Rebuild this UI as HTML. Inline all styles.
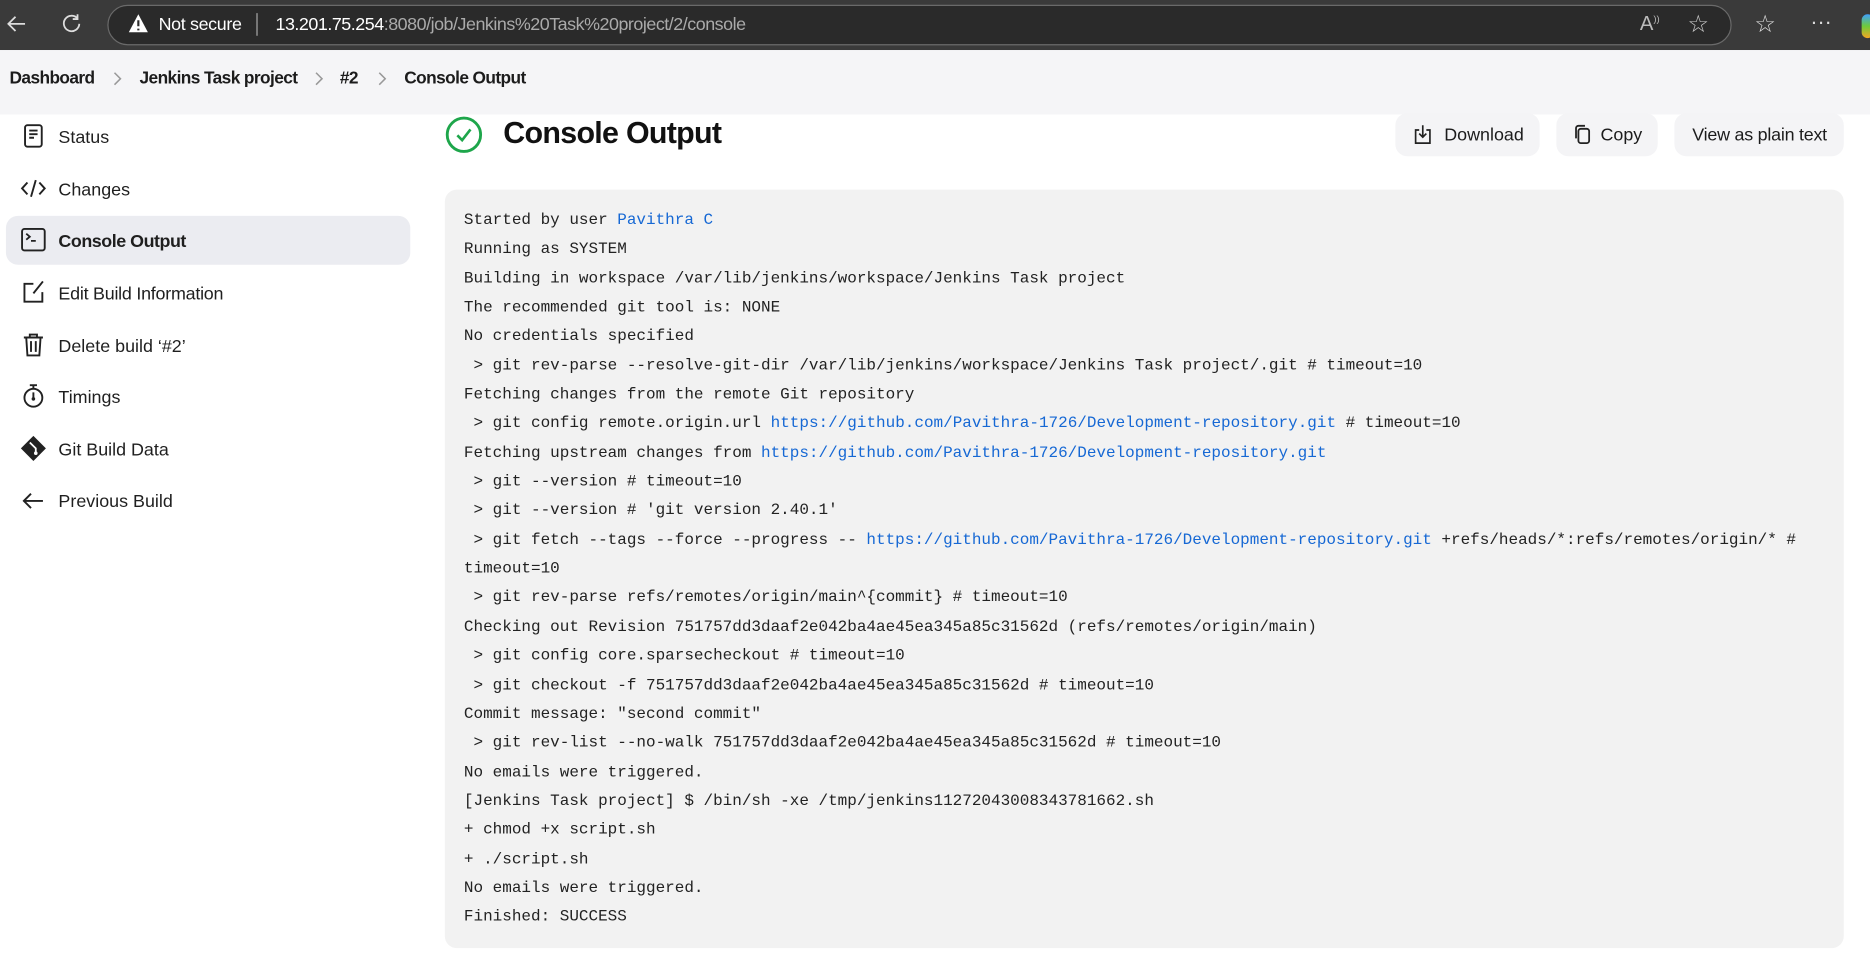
<!DOCTYPE html>
<html><head><meta charset="utf-8"><style>
html,body{margin:0;padding:0;width:1870px;height:967px;overflow:hidden;background:#fff}
#w{position:absolute;left:0;top:0;width:1568px;height:811px;transform:scale(1.19260);transform-origin:0 0;font-family:"Liberation Sans",sans-serif;color:#1c1c1c}
.a{position:absolute}
.top{left:0;top:0;width:1568px;height:42px;background:#3a3a3a}
.pill{left:90px;top:4px;width:1360px;height:32px;border:1px solid #6a6a6a;border-radius:17px;background:#2a2a2a}
.crumb{left:0;top:42px;width:1568px;height:54px;background:#f5f5f7}
.bc{top:58px;font-size:14.5px;font-weight:bold;color:#1c1c1c;letter-spacing:-0.5px}
.chev{top:60px}
.side{font-size:15px;color:#1f1f1f;left:49px}
.ic{left:17px;width:22px;height:22px}
.btn{top:95px;height:36px;background:#f4f4f6;border-radius:10px;font-size:15px;line-height:37px;color:#1c1c1c}
.con{left:373px;top:159px;width:1173px;height:636px;background:#f2f2f2;border-radius:10px}
pre{position:absolute;left:389px;top:174px;margin:0;font-family:"Liberation Mono",monospace;font-size:13.4px;line-height:24.35px;color:#222}
pre a{color:#1668d4;text-decoration:none}
</style></head><body><div id="w">
<div class="a top"></div>
<svg class="a" style="left:4px;top:10px" width="20" height="20" viewBox="0 0 20 20"><path d="M17 10H3M9 4L3 10l6 6" stroke="#ddd" stroke-width="1.5" fill="none"/></svg>
<svg class="a" style="left:50px;top:10px" width="20" height="20" viewBox="0 0 20 20"><path d="M15 5.5A6.5 6.5 0 1 0 16.5 10M15 2v4h-4" stroke="#ddd" stroke-width="1.5" fill="none"/></svg>
<div class="a pill"></div>
<svg class="a" style="left:107px;top:11px" width="18" height="17" viewBox="0 0 18 17"><path d="M9 1L17 16H1Z" fill="#fff"/><path d="M9 6v5M9 13v1.5" stroke="#2a2a2a" stroke-width="1.8"/></svg>
<div class="a" style="left:133px;top:12px;font-size:15px;color:#fff;letter-spacing:-0.3px">Not secure</div>
<div class="a" style="left:215px;top:11px;width:1px;height:19px;background:#aaa"></div>
<div class="a" style="left:231px;top:12px;font-size:15px;color:#aaa;letter-spacing:-0.4px"><span style="color:#fff">13.201.75.254</span>:8080/job/Jenkins%20Task%20project/2/console</div>
<div class="a" style="left:1375px;top:10px;font-size:17px;color:#bbb">A<sup style="font-size:8px">))</sup></div>
<div class="a" style="left:1415px;top:8px;font-size:20px;color:#ccc">☆</div>
<div class="a" style="left:1471px;top:8px;font-size:20px;color:#ddd">☆</div>
<div class="a" style="left:1518px;top:8px;font-size:18px;color:#ddd">···</div>
<div class="a" style="left:1561px;top:12px;width:10px;height:20px;border-radius:5px;background:linear-gradient(#3fa0ff,#6ecb3a,#f5a623)"></div>

<div class="a crumb"></div>
<div class="a bc" style="left:8px">Dashboard</div>
<svg class="a chev" style="left:94px" width="8" height="12" viewBox="0 0 8 12"><path d="M2 1l5 5-5 5" stroke="#999" stroke-width="1.3" fill="none"/></svg>
<div class="a bc" style="left:117px">Jenkins Task project</div>
<svg class="a chev" style="left:263px" width="8" height="12" viewBox="0 0 8 12"><path d="M2 1l5 5-5 5" stroke="#999" stroke-width="1.3" fill="none"/></svg>
<div class="a bc" style="left:285px">#2</div>
<svg class="a chev" style="left:316px" width="8" height="12" viewBox="0 0 8 12"><path d="M2 1l5 5-5 5" stroke="#999" stroke-width="1.3" fill="none"/></svg>
<div class="a bc" style="left:339px">Console Output</div>

<div class="a" style="left:5px;top:181px;width:339px;height:41px;background:#ebecf1;border-radius:10px"></div>
<svg class="a ic" style="top:103px" viewBox="0 0 22 22"><rect x="4" y="2" width="14" height="18" rx="2" stroke="#222" stroke-width="1.6" fill="none"/><path d="M7.5 6.5h7M7.5 9.5h7M7.5 12.5h4" stroke="#222" stroke-width="1.6"/></svg>
<div class="a side" style="top:107px">Status</div>
<svg class="a ic" style="top:147px" viewBox="0 0 22 22"><path d="M6 6L1.5 11 6 16M16 6l4.5 5L16 16M13 4L9 18" stroke="#222" stroke-width="1.6" fill="none"/></svg>
<div class="a side" style="top:151px">Changes</div>
<svg class="a ic" style="top:190px" viewBox="0 0 22 22"><rect x="1.5" y="2" width="19" height="18" rx="2" stroke="#222" stroke-width="1.6" fill="none"/><path d="M5 6l3 2.5L5 11M9 12h4" stroke="#222" stroke-width="1.5" fill="none"/></svg>
<div class="a side" style="top:194px;font-weight:bold;letter-spacing:-0.4px">Console Output</div>
<svg class="a ic" style="top:234px" viewBox="0 0 22 22"><path d="M11 4H3.5v15h15V11M19 2l-8 10" stroke="#222" stroke-width="1.6" fill="none"/></svg>
<div class="a side" style="top:238px;letter-spacing:-0.2px">Edit Build Information</div>
<svg class="a ic" style="top:278px" viewBox="0 0 22 22"><path d="M3 5h16M8 5V2.5h6V5M5 5l1 15h10l1-15M9 8v9M13 8v9" stroke="#222" stroke-width="1.6" fill="none"/></svg>
<div class="a side" style="top:282px">Delete build ‘#2’</div>
<svg class="a ic" style="top:321px" viewBox="0 0 22 22"><circle cx="11" cy="12.5" r="7.5" stroke="#222" stroke-width="1.6" fill="none"/><path d="M8 2h6M11 2v3M11 8v5" stroke="#222" stroke-width="1.6"/><circle cx="11" cy="13.5" r="1.5" fill="#222"/></svg>
<div class="a side" style="top:325px">Timings</div>
<svg class="a ic" style="top:365px" viewBox="0 0 22 22"><path d="M11 0.5L21.5 11 11 21.5 0.5 11Z" fill="#222"/><path d="M8 6l5 5v5M13 11" stroke="#fff" stroke-width="1.5" fill="none"/><circle cx="13" cy="15" r="1.5" fill="#fff"/></svg>
<div class="a side" style="top:369px">Git Build Data</div>
<svg class="a ic" style="top:409px" viewBox="0 0 22 22"><path d="M19 11H3M9 5L3 11l6 6" stroke="#222" stroke-width="1.6" fill="none"/></svg>
<div class="a side" style="top:412px">Previous Build</div>

<svg class="a" style="left:373px;top:97px" width="32" height="32" viewBox="0 0 32 32"><circle cx="16" cy="16" r="14" stroke="#1ea64b" stroke-width="2.4" fill="none"/><path d="M10.5 16.5l4 4 7-9" stroke="#1ea64b" stroke-width="2.2" fill="none"/></svg>
<div class="a" style="left:422px;top:98px;font-size:25.5px;font-weight:bold;color:#111;letter-spacing:-0.6px">Console Output</div>

<div class="a btn" style="left:1170px;width:121px"><svg class="a" style="left:15px;top:9px" width="16" height="18" viewBox="0 0 16 18"><path d="M5 5H2v11h12V5h-3M8 1v10M5 8l3 3 3-3" stroke="#222" stroke-width="1.4" fill="none"/></svg><span class="a" style="left:41px">Download</span></div>
<div class="a btn" style="left:1305px;width:85px"><svg class="a" style="left:14px;top:9px" width="16" height="18" viewBox="0 0 16 18"><rect x="4.5" y="4" width="9" height="12" rx="2" stroke="#222" stroke-width="1.5" fill="none"/><path d="M2.5 12V3.5a2 2 0 0 1 2-2H10" stroke="#222" stroke-width="1.5" fill="none"/></svg><span class="a" style="left:37px">Copy</span></div>
<div class="a btn" style="left:1404px;width:142px"><span class="a" style="left:15px;letter-spacing:-0.2px">View as plain text</span></div>

<div class="a con"></div>
<pre>Started by user <a>Pavithra C</a>
Running as SYSTEM
Building in workspace /var/lib/jenkins/workspace/Jenkins Task project
The recommended git tool is: NONE
No credentials specified
 &gt; git rev-parse --resolve-git-dir /var/lib/jenkins/workspace/Jenkins Task project/.git # timeout=10
Fetching changes from the remote Git repository
 &gt; git config remote.origin.url <a>https://github.com/Pavithra-1726/Development-repository.git</a> # timeout=10
Fetching upstream changes from <a>https://github.com/Pavithra-1726/Development-repository.git</a>
 &gt; git --version # timeout=10
 &gt; git --version # 'git version 2.40.1'
 &gt; git fetch --tags --force --progress -- <a>https://github.com/Pavithra-1726/Development-repository.git</a> +refs/heads/*:refs/remotes/origin/* #
timeout=10
 &gt; git rev-parse refs/remotes/origin/main^{commit} # timeout=10
Checking out Revision 751757dd3daaf2e042ba4ae45ea345a85c31562d (refs/remotes/origin/main)
 &gt; git config core.sparsecheckout # timeout=10
 &gt; git checkout -f 751757dd3daaf2e042ba4ae45ea345a85c31562d # timeout=10
Commit message: "second commit"
 &gt; git rev-list --no-walk 751757dd3daaf2e042ba4ae45ea345a85c31562d # timeout=10
No emails were triggered.
[Jenkins Task project] $ /bin/sh -xe /tmp/jenkins11272043008343781662.sh
+ chmod +x script.sh
+ ./script.sh
No emails were triggered.
Finished: SUCCESS</pre>
</div></body></html>
